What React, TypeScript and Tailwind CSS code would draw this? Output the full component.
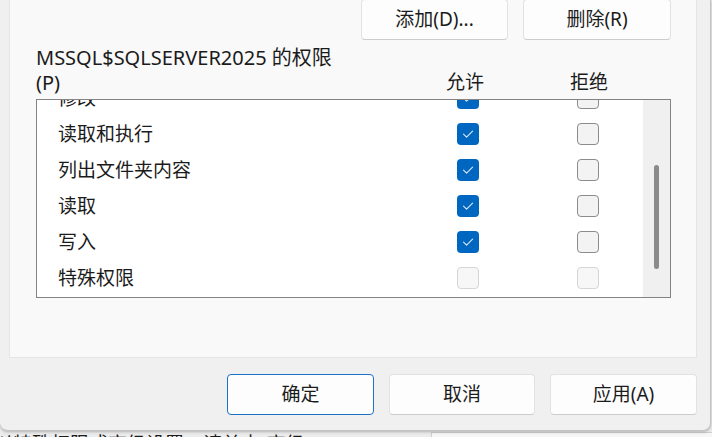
import React from "react";

const font = "font-['Noto_Sans','Noto_Sans_CJK_SC',sans-serif]";

function Check({ state }: { state: "on" | "off" | "disabled" }) {
  if (state === "on") {
    return (
      <div className="w-[22px] h-[22px] rounded-[4px] bg-[#0067c0] flex items-center justify-center">
        <svg width="22" height="22" viewBox="0 0 22 22">
          <polyline points="6.5,11.2 9.6,14.2 15.6,8.2" fill="none" stroke="#dce8f6" strokeWidth="1.1" strokeLinecap="round" strokeLinejoin="round" />
        </svg>
      </div>
    );
  }
  if (state === "disabled") {
    return <div className="w-[22px] h-[22px] rounded-[4px] border border-[#d6d6d6] bg-[#f7f7f7]" />;
  }
  return <div className="w-[22px] h-[22px] rounded-[4px] border border-[#8b8b8b] bg-[#f3f3f3]" />;
}

function Btn({ label, w, primary }: { label: string; w: string; primary?: boolean }) {
  return (
    <div
      className={`${w} h-[41px] rounded-[4px] flex items-center justify-center text-[19px] text-[#1b1b1b] bg-[#fdfdfd] ${
        primary ? "border border-[#1a73c8]" : "border border-[#e2e2e2] border-b-[#cdcdcd]"
      }`}
    >
      {label}
    </div>
  );
}

const rows: { name: string; allow: "on" | "off" | "disabled"; deny: "on" | "off" | "disabled" }[] = [
  { name: "修改", allow: "on", deny: "off" },
  { name: "读取和执行", allow: "on", deny: "off" },
  { name: "列出文件夹内容", allow: "on", deny: "off" },
  { name: "读取", allow: "on", deny: "off" },
  { name: "写入", allow: "on", deny: "off" },
  { name: "特殊权限", allow: "disabled", deny: "disabled" },
];

export default function App() {
  return (
    <div className={`w-[712px] h-[437px] overflow-hidden bg-[#ececec] ${font}`}>
      <div className="relative z-10 w-[711px] h-[431px] bg-[#f0f0f0] rounded-b-[8px] border-r border-b border-[#c4c4c4] shadow-[0_1px_3px_rgba(0,0,0,0.25)] flex flex-col">
        {/* tab page */}
        <div className="ml-[9px] w-[688px] h-[358px] bg-[#f9f9f9] border-l border-r border-b border-[#e5e5e5] flex flex-col pl-[26px] pr-[25px]">
          <div className="flex justify-end gap-[15px] -mt-[1px]">
            <Btn label="添加(D)..." w="w-[147px]" />
            <Btn label="删除(R)" w="w-[148px]" />
          </div>
          <div className="flex items-end mt-[5px] text-[19px] leading-[25px] text-[#1b1b1b]">
            <div className="w-[399px] text-[20px]">
              <div>MSSQL$SQLSERVER2025 的权限</div>
              <div>(P)</div>
            </div>
            <div className="w-[60px] text-center">允许</div>
            <div className="w-[64px]" />
            <div className="w-[60px] text-center">拒绝</div>
          </div>
          <div className="mt-[4px] w-[635px] h-[199px] border border-[#848484] bg-white flex overflow-hidden">
            <div className="flex-1 overflow-hidden">
              <div className="-mt-[20px] flex flex-col">
                {rows.map((r) => (
                  <div key={r.name} className="h-[36px] flex items-center text-[19px] text-[#1b1b1b]">
                    <div className="w-[420px] pl-[21px] whitespace-nowrap">{r.name}</div>
                    <Check state={r.allow} />
                    <div className="w-[98px]" />
                    <Check state={r.deny} />
                  </div>
                ))}
              </div>
            </div>
            <div className="w-[27px] bg-[#f0f0f0] flex justify-center pt-[65px]">
              <div className="w-[5px] h-[104px] rounded-full bg-[#8a8a8a]" />
            </div>
          </div>
        </div>
        {/* footer */}
        <div className="flex justify-end gap-[15px] mt-[16px] pr-[13px]">
          <Btn label="确定" w="w-[147px]" primary />
          <Btn label="取消" w="w-[146px]" />
          <Btn label="应用(A)" w="w-[147px]" />
        </div>
      </div>
      {/* window behind */}
      <div className="relative mt-[1px] h-[20px] flex">
        <div className="w-[437px] text-[19px] leading-[24px] text-[#1b1b1b] whitespace-nowrap -ml-[6px]">
          以特殊权限或高级设置，请单击“高级”。
        </div>
        <div className="flex-1 border-l border-t border-[#cfcfcf] bg-[#f6f6f6]" />
      </div>
    </div>
  );
}
